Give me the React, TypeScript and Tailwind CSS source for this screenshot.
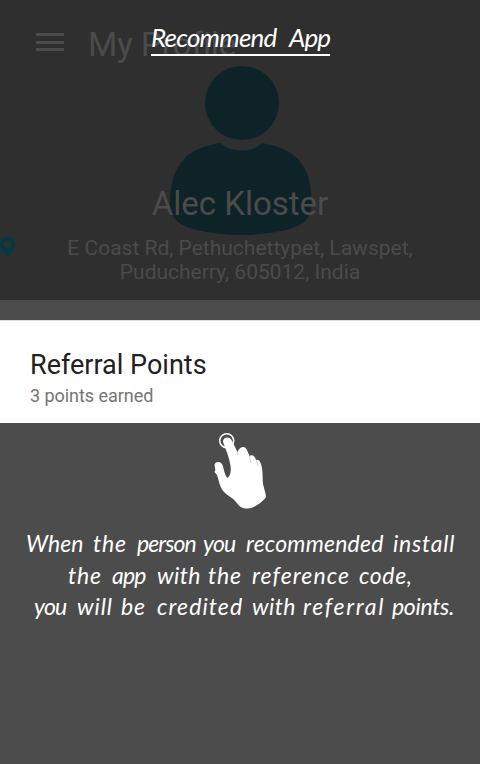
type Word = { text: string; className: string };

const lines: { className: string; words: Word[] }[] = [
  {
    className: 'pl-[26px]',
    words: [
      { text: 'When', className: 'w-[67px]' },
      { text: 'the', className: 'w-[44px] tracking-[0.8px]' },
      { text: 'person', className: 'w-[66px] tracking-[-0.9px]' },
      { text: 'you', className: 'w-[43px] tracking-[-0.8px]' },
      { text: 'recommended', className: 'w-[147px] tracking-[0.2px]' },
      { text: 'install', className: 'w-[66px] tracking-[0.8px]' },
    ],
  },
  {
    className: 'pl-[68px]',
    words: [
      { text: 'the', className: 'w-[44px] tracking-[0.8px]' },
      { text: 'app', className: 'w-[45px] tracking-[-0.8px]' },
      { text: 'with', className: 'w-[51px] tracking-[0.4px]' },
      { text: 'the', className: 'w-[44px] tracking-[0.8px]' },
      { text: 'reference', className: 'w-[107px] tracking-[1.1px]' },
      { text: 'code,', className: 'w-[60px] tracking-[0.6px]' },
    ],
  },
  {
    className: 'pl-[34px]',
    words: [
      { text: 'you', className: 'w-[43px] tracking-[-0.8px]' },
      { text: 'will', className: 'w-[44px] tracking-[0.9px]' },
      { text: 'be', className: 'w-[36px] tracking-[0.8px]' },
      { text: 'credited', className: 'w-[95px] tracking-[1.1px]' },
      { text: 'with', className: 'w-[51px] tracking-[0.4px]' },
      { text: 'referral', className: 'w-[89px] tracking-[1.7px]' },
      { text: 'points.', className: 'w-[66px] tracking-[-0.3px]' },
    ],
  },
];

function MenuIcon() {
  return (
    <div className="flex w-7 flex-col gap-[4.5px]">
      <span className="h-[3px] bg-[#4b4b4b]" />
      <span className="h-[3px] bg-[#4b4b4b]" />
      <span className="h-[3px] bg-[#4b4b4b]" />
    </div>
  );
}

function Avatar() {
  return (
    <svg viewBox="0 0 144 170" className="absolute left-[170px] top-[66px] h-[170px] w-[144px]" fill="#0e2328">
      <circle cx="72" cy="37" r="37" />
      <path d="M50 77Q58 84.5 72 84.5Q84 84.5 92 77Q116 81 128 93C138 104 141 117 141.5 134C142 153 134 159 116 164Q72 174 27 164C9 159-1 153 0 134C1 117 4 104 14 93Q25 81 50 77Z" />
    </svg>
  );
}

function PinIcon() {
  return (
    <svg viewBox="0 0 16 20" className="absolute left-0 top-[237px] h-5 w-4" fill="#003a42" fillRule="evenodd">
      <path d="M7.5 0A7.5 7.5 0 0 1 15 7.5C15 11 12 15 7.5 20C3 15 0 11 0 7.5A7.5 7.5 0 0 1 7.5 0ZM7.5 4A3.5 3.5 0 1 0 7.5 11A3.5 3.5 0 1 0 7.5 4Z" />
    </svg>
  );
}

function TapIcon() {
  return (
    <svg viewBox="0 0 56 78" className="ml-[212px] h-[78px] w-14" fill="white">
      <circle cx="14.7" cy="8.7" r="7" fill="none" stroke="white" strokeWidth="1.5" />
      <path d="M11 10C11 4.5 18 4 20 9L25.5 20C28 14 33 13.5 35 18L37.5 24C40 22 43 24 44 28C46 27 48 28.5 49 32C51.5 40 50 48 51.500 54C53 60 54.5 63 53.5 66C49 71 42 76 36 76.5C30 77 27 74 24 70C21 66 16 64 12 60C8 56 7 49 5 43L2.5 40C4 38 3 36 2.5 33C3 29.5 7.500 29 10 32C12 36 12 42 15.5 46C18.5 44 19.2 39 18.5 34C17.5 26 14 18 11 10Z" />
      <path d="M25.500 20L26 23M37.5 24L39 31M44 28L46 34" stroke="#bdbdbd" strokeWidth="0.7" fill="none" />
    </svg>
  );
}

export default function App() {
  return (
    <main className="flex h-[764px] w-[480px] flex-col overflow-hidden bg-[#4c4c4c] font-[Roboto,sans-serif]">
      <header className="relative h-[300px] bg-[#2f2f2f] text-[#4b4b4b]">
        <Avatar />
        <div className="relative flex h-[84px] items-center pl-9">
          <MenuIcon />
          <h1 className="ml-6 mt-1.5 text-[33.5px] leading-10 tracking-[-0.2px]">My Profile</h1>
        </div>
        <h2 className="relative mt-[100px] text-center text-[33px] leading-10">Alec Kloster</h2>
        <PinIcon />
        <p className="relative mt-3 text-center text-[21px] leading-6">
          E Coast Rd, Pethuchettypet, Lawspet,
          <br />
          Puducherry, 605012, India
        </p>
        <div className="absolute left-[151px] top-[20px] flex h-9 w-[179px] justify-between border-b-2 border-white font-[Lato,sans-serif] text-[26px] italic leading-[34px] text-white">
          <span className="tracking-[-0.8px]">Recommend</span>
          <span className="tracking-[-1px]">App</span>
        </div>
      </header>

      <section className="mt-5 flex h-[103px] flex-col border-t border-[#dedede] bg-white pl-[30px] pt-7">
        <h3 className="text-[27px] leading-8 text-[#212121]">Referral Points</h3>
        <p className="mt-1 text-[18px] leading-[22px] tracking-[-0.05px] text-[#757575]">3 points earned</p>
      </section>

      <section className="pt-[9px] text-white">
        <TapIcon />
        <div className="mt-[17px] font-[Lato,sans-serif] text-[23px] italic">
          {lines.map((line, i) => (
            <p key={i} className={`flex h-[31.5px] whitespace-pre leading-8 ${line.className}`}>
              {line.words.map((word, j) => (
                <span key={j} className={`shrink-0 ${word.className}`}>
                  {word.text}{' '}
                </span>
              ))}
            </p>
          ))}
        </div>
      </section>
    </main>
  );
}
